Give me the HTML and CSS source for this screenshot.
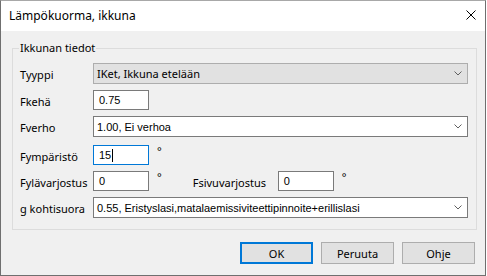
FILE: index.html
```html
<!DOCTYPE html>
<html lang="fi">
<head>
  <meta charset="UTF-8" />
  <title>Lämpökuorma, ikkuna</title>
  <link rel="stylesheet" href="styles.css">
</head>
<body>
  <div class="window">
    <div class="titlebar">
      <span class="title">Lämpökuorma, ikkuna</span>
      <svg class="close" width="10" height="10" viewBox="0 0 10 10">
        <path d="M0.5 0.5 L9.5 9.5 M9.5 0.5 L0.5 9.5" stroke="#000" stroke-width="1" fill="none"/>
      </svg>
    </div>

    <div class="dialog-body">
      <fieldset class="group">
        <legend>Ikkunan tiedot</legend>

        <div class="row">
          <label>Tyyppi</label>
          <div class="combo disabled">
            <span>IKet, Ikkuna etelään</span>
            <svg class="chevron" width="8" height="5" viewBox="0 0 8 5"><path d="M0.5 0.5 L4 4 L7.5 0.5" stroke="#606060" fill="none"/></svg>
          </div>
        </div>

        <div class="row">
          <label>Fkehä</label>
          <div class="field">0.75</div>
        </div>

        <div class="row">
          <label>Fverho</label>
          <div class="combo">
            <span>1.00, Ei verhoa</span>
            <svg class="chevron" width="8" height="5" viewBox="0 0 8 5"><path d="M0.5 0.5 L4 4 L7.5 0.5" stroke="#606060" fill="none"/></svg>
          </div>
        </div>

        <div class="row row-spaced">
          <label>Fympäristö</label>
          <div class="field focused">15<span class="caret"></span></div>
          <span class="deg">°</span>
        </div>

        <div class="row">
          <label>Fylävarjostus</label>
          <div class="field">0</div>
          <span class="deg">°</span>
          <label class="side-label">Fsivuvarjostus</label>
          <div class="field">0</div>
          <span class="deg">°</span>
        </div>

        <div class="row">
          <label>g kohtisuora</label>
          <div class="combo">
            <span>0.55, Eristyslasi,matalaemissiviteettipinnoite+erillislasi</span>
            <svg class="chevron" width="8" height="5" viewBox="0 0 8 5"><path d="M0.5 0.5 L4 4 L7.5 0.5" stroke="#606060" fill="none"/></svg>
          </div>
        </div>
      </fieldset>

      <div class="buttons">
        <button class="btn default">OK</button>
        <button class="btn">Peruuta</button>
        <button class="btn">Ohje</button>
      </div>
    </div>
  </div>
</body>
</html>
```

FILE: styles.css
```css
* {
  margin: 0;
  padding: 0;
  box-sizing: border-box;
}

body {
  background: #ffffff;
  font-family: "Noto Sans", "Open Sans", Arial, sans-serif;
  font-size: 11px;
  color: #000;
}

.window {
  width: 486px;
  height: 276px;
  border: 1px solid #6f6f6f;
  border-top-color: #a8a8a8;
  background: #f0f0f0;
  display: flex;
  flex-direction: column;
}

.titlebar {
  height: 30px;
  background: #ffffff;
  display: flex;
  align-items: center;
  justify-content: space-between;
  padding: 0 9px 1px 8px;
}

.title {
  font-size: 12px;
  color: #000;
}

.close {
  display: block;
  margin-top: -1px;
}

.dialog-body {
  flex: 1;
  padding: 9px 8px 0 11px;
}

/* group box */
.group {
  border: 1px solid #dcdcdc;
  padding: 7px 0 11px 7px;
  display: flex;
  flex-direction: column;
  gap: 6px;
}

.group legend {
  padding: 0 1px;
  margin-left: -1px;
  line-height: 16px;
}

.row {
  display: flex;
  align-items: center;
}

.row-spaced {
  margin-top: 2px;
}

.row label {
  width: 73px;
  padding-top: 2px;
}

.field, .combo {
  font-family: "Liberation Sans", Arial, sans-serif;
  font-size: 11px;
  background: #ffffff;
  border: 1px solid #7a7a7a;
  display: flex;
  align-items: center;
}

.field {
  width: 56px;
  height: 20px;
  padding-left: 5px;
}

.field.focused {
  border-color: #0078d7;
}

.caret {
  display: inline-block;
  width: 1px;
  height: 13px;
  background: #000;
  margin-left: 1px;
}

.combo {
  width: 375px;
  height: 21px;
  padding: 0 5px 0 3px;
  justify-content: space-between;
}

.combo.disabled {
  background: #e1e1e1;
  border-color: #adadad;
  font-family: "Noto Sans", Arial, sans-serif;
}

.chevron {
  display: block;
}

.deg {
  align-self: flex-start;
  margin-left: 8px;
  font-size: 11px;
  line-height: 11px;
}

.side-label {
  margin-left: 31px;
  width: 85px !important;
}

.buttons {
  display: flex;
  justify-content: flex-end;
  gap: 8px;
  margin-top: 12px;
  padding-right: 2px;
}

.btn {
  width: 73px;
  height: 22px;
  background: #e1e1e1;
  border: 1px solid #adadad;
  font-family: "Noto Sans", Arial, sans-serif;
  font-size: 11px;
  color: #000;
}

.btn.default {
  border: 2px solid #0078d7;
}
```
